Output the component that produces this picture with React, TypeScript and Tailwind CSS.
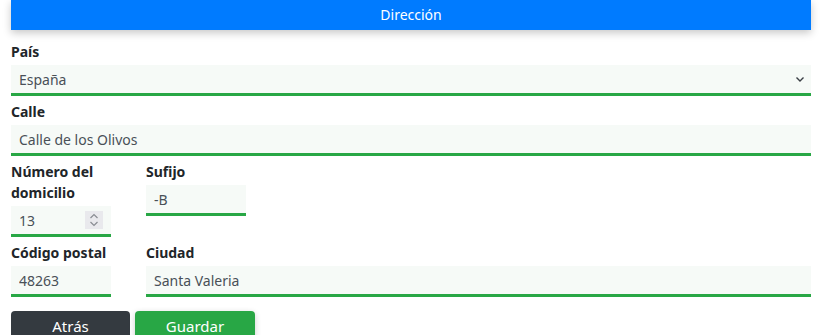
import { useState } from "react";

const inputCls =
  "w-full h-[31px] bg-[#f6faf7] border-0 border-b-[3px] border-[#28a745] pl-[8px] pr-2 text-[14px] text-[#495057] outline-none";

function Field({
  label,
  children,
  className = "",
}: {
  label: React.ReactNode;
  children: React.ReactNode;
  className?: string;
}) {
  return (
    <div className={className}>
      <label className="block text-[14px] leading-[21px] font-bold text-[#212529] mb-[3px]">
        {label}
      </label>
      {children}
    </div>
  );
}

export default function App() {
  const [pais, setPais] = useState("España");
  const [calle, setCalle] = useState("Calle de los Olivos");
  const [numero, setNumero] = useState("13");
  const [sufijo, setSufijo] = useState("-B");
  const [cp, setCp] = useState("48263");
  const [ciudad, setCiudad] = useState("Santa Valeria");

  return (
    <div
      className="w-[800px] mx-[11px] bg-white"
      style={{ fontFamily: '"Noto Sans", "Open Sans", sans-serif' }}
    >
      {/* header */}
      <div className="h-[30px] bg-[#007bff] text-white text-[14px] leading-[30px] text-center shadow-[0_3px_8px_rgba(0,0,0,0.22)]">
        Dirección
      </div>

      <div className="pt-[11px] flex flex-col gap-[5px]">
        <Field label="País">
          <div className="relative">
            <select
              value={pais}
              onChange={(e) => setPais(e.target.value)}
              className={`${inputCls} appearance-none`}
            >
              <option>España</option>
              <option>Portugal</option>
              <option>Francia</option>
            </select>
            <svg
              className="absolute right-[6px] top-[10px] pointer-events-none"
              width="10"
              height="8"
              viewBox="0 0 10 8"
            >
              <path d="M1.5 2.5 L5 6 L8.5 2.5" fill="none" stroke="#3b3f45" strokeWidth="1.4" />
            </svg>
          </div>
        </Field>

        <Field label="Calle">
          <input value={calle} onChange={(e) => setCalle(e.target.value)} className={inputCls} />
        </Field>

        <div className="flex gap-[35px]">
          <Field label={<>Número del<br />domicilio</>} className="w-[100px]">
            <div className="relative">
              <input
                value={numero}
                onChange={(e) => setNumero(e.target.value)}
                className={inputCls}
              />
              <div className="absolute left-[74px] top-[5px] w-[18px] h-[18px] bg-[#e9e9ed] flex flex-col items-center justify-center gap-[2px]">
                <svg width="10" height="6" viewBox="0 0 10 6">
                  <path d="M1.5 5 L5 1.5 L8.5 5" fill="none" stroke="#8a8d93" strokeWidth="1.2" />
                </svg>
                <svg width="10" height="6" viewBox="0 0 10 6">
                  <path d="M1.5 1 L5 4.5 L8.5 1" fill="none" stroke="#8a8d93" strokeWidth="1.2" />
                </svg>
              </div>
            </div>
          </Field>
          <Field label="Sufijo" className="w-[100px]">
            <input value={sufijo} onChange={(e) => setSufijo(e.target.value)} className={inputCls} />
          </Field>
        </div>

        <div className="flex gap-[35px]">
          <Field label="Código postal" className="w-[100px]">
            <input value={cp} onChange={(e) => setCp(e.target.value)} className={inputCls} />
          </Field>
          <Field label="Ciudad" className="flex-1">
            <input value={ciudad} onChange={(e) => setCiudad(e.target.value)} className={inputCls} />
          </Field>
        </div>
      </div>

      <div className="flex gap-[5px] mt-[14px]">
        <button className="w-[119px] h-[38px] rounded-[4px] bg-[#343a40] text-white text-[15px] pb-[8px]">
          Atrás
        </button>
        <button className="w-[120px] h-[38px] rounded-[4px] bg-[#28a745] text-white text-[15px] pb-[8px] shadow-[0_2px_6px_rgba(0,0,0,0.2)]">
          Guardar
        </button>
      </div>
    </div>
  );
}
